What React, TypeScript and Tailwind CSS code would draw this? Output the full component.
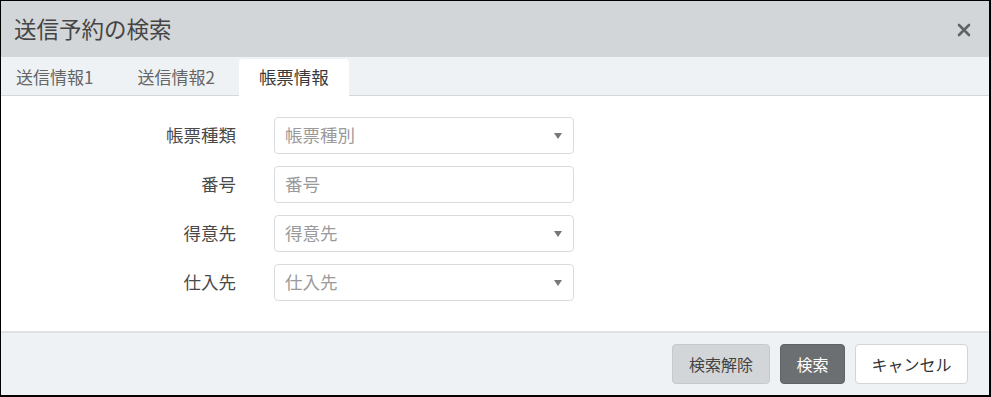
import React from "react";

type Field = {
  label: string;
  placeholder: string;
  select: boolean;
};

const fields: Field[] = [
  { label: "帳票種類", placeholder: "帳票種別", select: true },
  { label: "番号", placeholder: "番号", select: false },
  { label: "得意先", placeholder: "得意先", select: true },
  { label: "仕入先", placeholder: "仕入先", select: true },
];

const tabs = ["送信情報1", "送信情報2", "帳票情報"];

const App = () => {
  return (
    <div
      className="w-[991px] h-[397px] border-t border-l border-r-2 border-b-2 border-black bg-white flex flex-col overflow-hidden"
      style={{ fontFamily: '"Noto Sans CJK JP", "Noto Sans", sans-serif' }}
    >
      {/* header */}
      <div className="h-[56px] shrink-0 bg-[#d3d6d8] flex items-center justify-between pl-[13px] pr-[18px]">
        <h1 className="text-[22.5px] text-[#454545]">送信予約の検索</h1>
        <svg width="14" height="14" viewBox="0 0 14 14" className="mt-[1px]">
          <path d="M2 2 L12 12 M12 2 L2 12" stroke="#606366" strokeWidth="2.6" strokeLinecap="round" />
        </svg>
      </div>
      {/* tabs */}
      <div className="h-[39px] shrink-0 bg-[#eef2f5] border-b border-[#d4d8db] flex items-end gap-[4px]">
        {tabs.map((tab, i) => {
          const active = i === 2;
          return (
            <div
              key={tab}
              className={
                active
                  ? "h-[37px] px-[20px] bg-white rounded-t-[4px] flex items-center text-[17.5px] text-[#3a3a3a] -mb-px"
                  : i === 0
                    ? "h-[37px] pl-[15px] pr-[20px] flex items-center text-[17px] text-[#666]"
                    : "h-[37px] px-[20px] flex items-center text-[17px] text-[#666]"
              }
            >
              {tab}
            </div>
          );
        })}
      </div>
      {/* body */}
      <div className="flex-1 flex flex-col gap-[12px] pt-[21px]">
        {fields.map((field) => (
          <div key={field.label} className="flex items-center">
            <label className="w-[236px] pr-[1px] text-right text-[17.5px] text-[#4a4a4a]">
              {field.label}
            </label>
            <div className="ml-[37px] w-[300px] h-[37px] border border-[#d9dcdf] rounded-[4px] flex items-center justify-between pl-[10px] pr-[11px]">
              <span className="text-[17.5px] text-[#9a9a9a]">{field.placeholder}</span>
              {field.select && (
                <svg width="8" height="6" viewBox="0 0 8 6">
                  <path d="M0 0 L8 0 L4 6 Z" fill="#777" />
                </svg>
              )}
            </div>
          </div>
        ))}
      </div>
      {/* footer */}
      <div className="h-[64px] shrink-0 bg-[#eef2f5] border-t-2 border-[#dfe2e4] flex items-center justify-end gap-[10px] pr-[21px]">
        <button className="h-[40px] w-[98px] rounded-[4px] bg-[#d3d6d8] border border-[#c6cacd] text-[16px] text-[#444]">
          検索解除
        </button>
        <button className="h-[40px] w-[65px] rounded-[4px] bg-[#6b6f72] border border-[#5f6366] text-[16px] text-white">
          検索
        </button>
        <button className="h-[40px] w-[113px] rounded-[4px] bg-white border border-[#d2d5d8] text-[16px] text-[#333]">
          キャンセル
        </button>
      </div>
    </div>
  );
};

export default App;
